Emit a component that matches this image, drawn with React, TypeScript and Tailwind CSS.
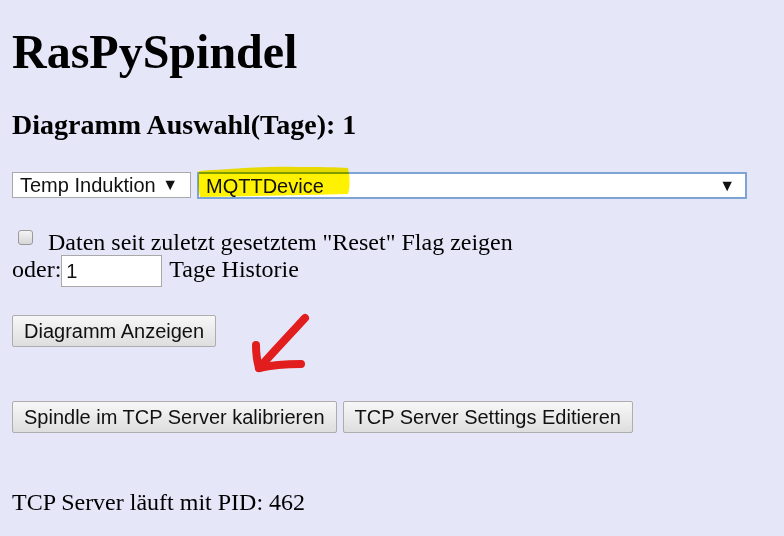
import React from 'react';

const btn =
  "h-[32px] rounded-[2px] border border-[#adadad] bg-gradient-to-b from-[#f7f7f7] to-[#dedede] px-[11px] font-['Liberation_Sans',Arial,sans-serif] text-[20px] leading-none text-[#111]";

function Highlight() {
  return (
    <svg
      className="pointer-events-none absolute left-[-2px] top-[-9px] mix-blend-multiply"
      width="154"
      height="34"
      viewBox="0 0 154 34"
    >
      <path
        d="M2 6 C30 4 70 1 100 2 C120 2 140 2 151 3 C153 12 153 22 151 29 C110 30 60 31 3 32 C1 24 1 13 2 6 Z"
        fill="#fff200"
      />
    </svg>
  );
}

function Arrow() {
  return (
    <svg
      className="pointer-events-none absolute left-[240px] top-[305px]"
      width="80"
      height="72"
      viewBox="0 0 80 72"
      fill="none"
      stroke="#e11d1d"
      strokeWidth="8"
      strokeLinecap="round"
      strokeLinejoin="round"
    >
      <path d="M65 13 C52 27 36 44 19 63" />
      <path d="M16 40 C16 48 17 56 19 63" />
      <path d="M19 63 C32 60 46 59 61 59" />
    </svg>
  );
}

export default function App() {
  return (
    <main className="relative min-h-screen bg-[#e6e6f9] px-[12px] pt-[28px] font-['Liberation_Serif','Times_New_Roman',serif] text-[24px] text-black">
      <h1 className="text-[48px] font-bold leading-[48px]">RasPySpindel</h1>
      <h3 className="mt-[35px] text-[28px] font-bold leading-[28px]">Diagramm Auswahl(Tage): 1</h3>

      <div className="mt-[33px] flex gap-[6px] font-['Liberation_Sans',Arial,sans-serif] text-[20px] text-[#111]">
        <div className="flex h-[26px] w-[179px] items-center justify-between border border-[#a9a9a9] bg-white pl-[7px] pr-[12px]">
          <span>Temp Induktion</span>
          <span className="text-[16px]">▼</span>
        </div>
        <div className="relative flex h-[27px] w-[550px] items-center justify-between border-2 border-[#7ea4d6] bg-white pl-[7px] pr-[10px]">
          <Highlight />
          <span className="relative">MQTTDevice</span>
          <span className="text-[16px]">▼</span>
        </div>
      </div>

      <div className="mt-[29px] flex h-[27px] items-start leading-[28px]">
        <div className="ml-[6px] mt-[2px] h-[15px] w-[15px] rounded-[3px] border border-[#9a9a9a] bg-gradient-to-b from-[#f4f4f4] to-[#d6d6d6]" />
        <span className="ml-[15px]">Daten seit zuletzt gesetztem "Reset" Flag zeigen</span>
      </div>

      <div className="flex items-start leading-[28px]">
        <span>oder:</span>
        <input
          readOnly
          value="1"
          className="h-[32px] w-[101px] border border-[#a9a9a9] bg-white px-[4px] font-['Liberation_Sans',Arial,sans-serif] text-[20px] text-[#111] outline-none"
        />
        <span className="ml-[7px]">Tage Historie</span>
      </div>

      <div className="mt-[28px] flex">
        <button type="button" className={btn}>
          Diagramm Anzeigen
        </button>
      </div>

      <div className="mt-[54px] flex gap-[6px]">
        <button type="button" className={btn}>
          Spindle im TCP Server kalibrieren
        </button>
        <button type="button" className={btn}>
          TCP Server Settings Editieren
        </button>
      </div>

      <p className="mt-[55px] leading-[28px]">TCP Server läuft mit PID: 462</p>

      <Arrow />
    </main>
  );
}
